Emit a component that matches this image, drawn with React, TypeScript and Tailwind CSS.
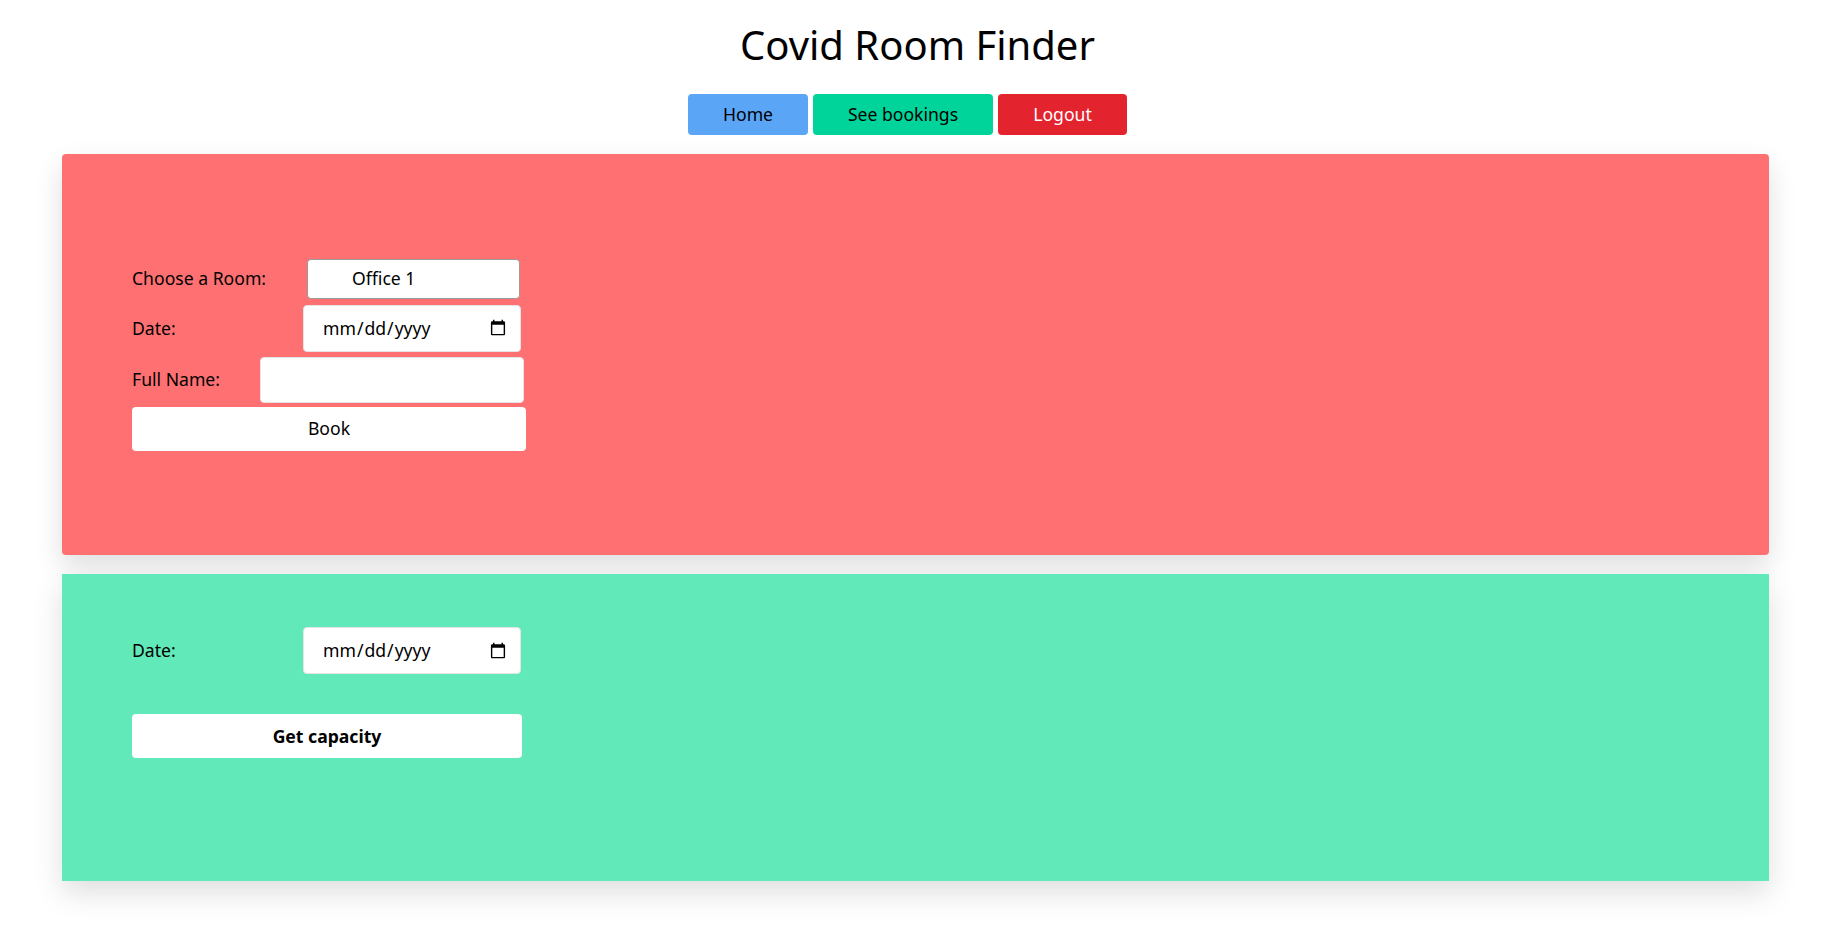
import { useState } from "react";

const font = "font-['Noto_Sans',_'Open_Sans',_sans-serif]";

export default function App() {
  const [room, setRoom] = useState("office1");
  const [date, setDate] = useState("");
  const [name, setName] = useState("");
  const [capDate, setCapDate] = useState("");

  return (
    <div className={`${font} min-h-[940px] bg-white text-black`}>
      <h1 className="pt-[20px] text-center text-[40px] leading-[50px] font-normal">
        Covid Room Finder
      </h1>

      <nav className="mt-[24px] flex justify-center gap-[5px] pr-[20px] text-[17.6px]">
        <button className="h-[41px] w-[120px] rounded bg-[#5aa5f6] text-black">Home</button>
        <button className="h-[41px] w-[180px] rounded bg-[#00d49a] text-black">See bookings</button>
        <button className="h-[41px] w-[129px] rounded bg-[#e3242f] text-white">Logout</button>
      </nav>

      <section className="mt-[19px] ml-[62px] flex h-[401px] w-[1707px] items-center rounded bg-[#ff7072] pl-[70px] shadow-[0_12px_28px_rgba(0,0,0,0.13)]">
        <form className="flex w-[394px] flex-col text-[17.6px]" onSubmit={(e) => e.preventDefault()}>
          <div className="flex items-center">
            <label htmlFor="room">Choose a Room:</label>
            <select
              id="room"
              value={room}
              onChange={(e) => setRoom(e.target.value)}
              className="mr-[6px] ml-auto h-[40px] w-[213px] appearance-none rounded border border-[#9a9a9a] bg-white pl-[44px] outline-none"
            >
              <option value="office1">Office 1</option>
              <option value="office2">Office 2</option>
              <option value="meeting">Meeting Room</option>
            </select>
          </div>
          <div className="mt-[6px] flex items-center">
            <label htmlFor="date">Date:</label>
            <input
              id="date"
              type="date"
              value={date}
              onChange={(e) => setDate(e.target.value)}
              className="mr-[5px] ml-auto h-[47px] w-[218px] rounded border border-[#e5e5e5] bg-white pr-[11px] pl-[18px] outline-none"
            />
          </div>
          <div className="mt-[5px] flex items-center">
            <label htmlFor="fullname">Full Name:</label>
            <input
              id="fullname"
              type="text"
              value={name}
              onChange={(e) => setName(e.target.value)}
              className="mr-[2px] ml-auto h-[46px] w-[264px] rounded border border-[#e5e5e5] bg-white px-3 outline-none"
            />
          </div>
          <button type="submit" className="mt-[4px] h-[44px] w-[394px] rounded bg-white">
            Book
          </button>
        </form>
      </section>

      <section className="mt-[19px] ml-[62px] h-[307px] w-[1707px] bg-[#61e9b9] pt-[53px] pl-[70px] shadow-[0_12px_28px_rgba(0,0,0,0.13)]">
        <form className="flex w-[394px] flex-col text-[17.6px]" onSubmit={(e) => e.preventDefault()}>
          <div className="flex items-center">
            <label htmlFor="capdate">Date:</label>
            <input
              id="capdate"
              type="date"
              value={capDate}
              onChange={(e) => setCapDate(e.target.value)}
              className="mr-[5px] ml-auto h-[47px] w-[218px] rounded border border-[#e5e5e5] bg-white pr-[11px] pl-[18px] outline-none"
            />
          </div>
          <button type="submit" className="mt-[40px] h-[44px] w-[390px] rounded bg-white font-bold">
            Get capacity
          </button>
        </form>
      </section>
    </div>
  );
}
